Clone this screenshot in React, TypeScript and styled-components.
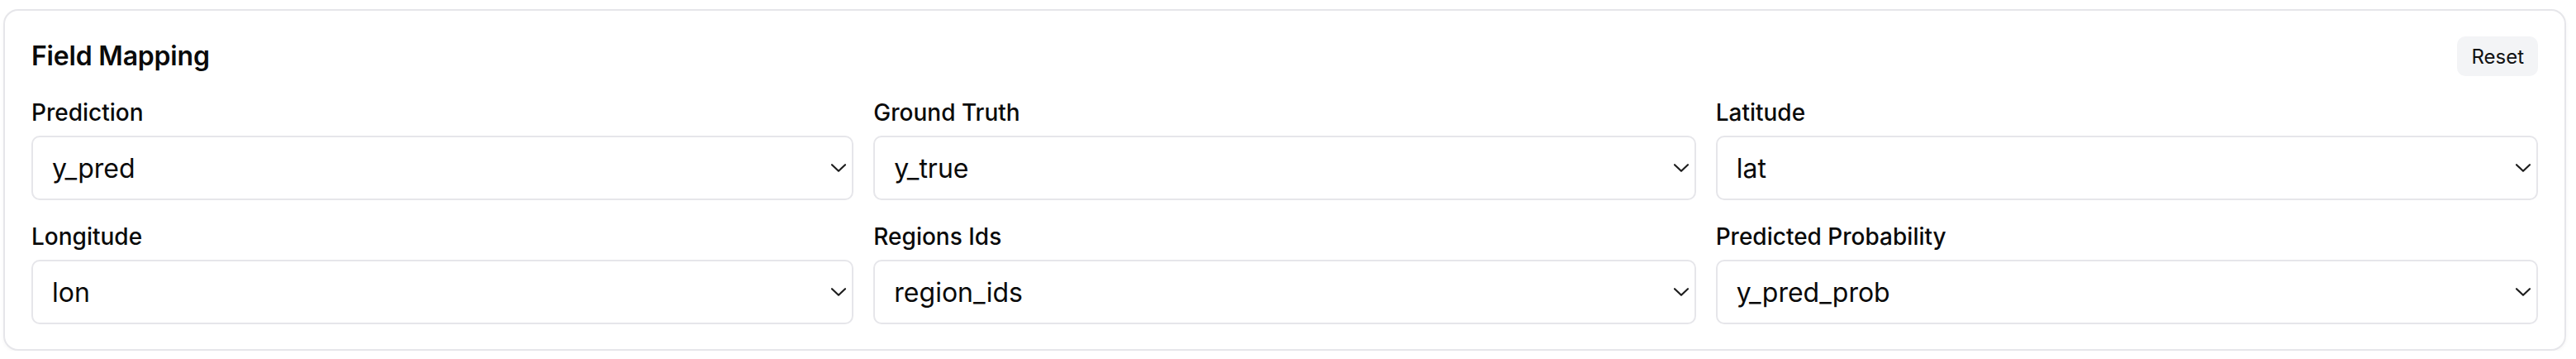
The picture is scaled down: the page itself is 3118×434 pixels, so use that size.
import styled, { createGlobalStyle } from 'styled-components';

const GlobalStyle = createGlobalStyle`
  html, body {
    margin: 0;
    padding: 0;
    background: #ffffff;
  }
  body {
    font-family: Inter, "Noto Sans", "Liberation Sans", sans-serif;
    color: #0a0a0a;
  }
`;

const fields = [
  { label: 'Prediction', value: 'y_pred' },
  { label: 'Ground Truth', value: 'y_true' },
  { label: 'Latitude', value: 'lat' },
  { label: 'Longitude', value: 'lon' },
  { label: 'Regions Ids', value: 'region_ids' },
  { label: 'Predicted Probability', value: 'y_pred_prob' },
];

function Chevron() {
  return (
    <ChevronIcon width="18" height="10" viewBox="0 0 18 10" fill="none">
      <path
        d="M1 1.2 L9 8.8 L17 1.2"
        stroke="#1f1f1f"
        strokeWidth="2.2"
        strokeLinecap="round"
        strokeLinejoin="round"
      />
    </ChevronIcon>
  );
}

export default function App() {
  return (
    <>
      <GlobalStyle />
      <Card>
        <Header>
          <Title>Field Mapping</Title>
          <ResetButton type="button">Reset</ResetButton>
        </Header>
        <FieldGrid>
          {fields.map((field) => (
            <Field key={field.label}>
              <Label>{field.label}</Label>
              <SelectWrap>
                <Select defaultValue={field.value}>
                  <option value={field.value}>{field.value}</option>
                </Select>
                <Chevron />
              </SelectWrap>
            </Field>
          ))}
        </FieldGrid>
      </Card>
    </>
  );
}

const Card = styled.section`
  box-sizing: border-box;
  width: 3102px;
  margin: 11px 0 0 4px;
  padding: 31px 32px 30px;
  border: 2px solid #e6e6ea;
  border-radius: 18px;
  background: #ffffff;
  box-shadow: 0 2px 4px rgba(0, 0, 0, 0.04);
  display: flex;
  flex-direction: column;
  gap: 24px;
`;

const Header = styled.div`
  display: flex;
  align-items: center;
  justify-content: space-between;
  height: 48px;
`;

const Title = styled.h2`
  margin: 0;
  font-size: 32px;
  font-weight: 600;
  line-height: 48px;
  letter-spacing: -0.2px;
`;

const ResetButton = styled.button`
  height: 48px;
  padding: 0 17px;
  border: none;
  border-radius: 10px;
  background: #f3f4f6;
  font-family: inherit;
  font-size: 24px;
  font-weight: 400;
  color: #111111;
  cursor: pointer;
`;

const FieldGrid = styled.div`
  display: grid;
  grid-template-columns: repeat(3, 1fr);
  column-gap: 24px;
  row-gap: 24px;
`;

const Field = styled.div`
  display: flex;
  flex-direction: column;
  gap: 8px;
`;

const Label = styled.label`
  font-size: 28px;
  font-weight: 500;
  line-height: 40px;
`;

const SelectWrap = styled.div`
  position: relative;
`;

const Select = styled.select`
  box-sizing: border-box;
  width: 100%;
  height: 78px;
  padding: 0 48px 0 23px;
  border: 2px solid #e6e6ea;
  border-radius: 10px;
  background: #ffffff;
  appearance: none;
  font-family: inherit;
  font-size: 32px;
  color: #0a0a0a;
  outline: none;
`;

const ChevronIcon = styled.svg`
  position: absolute;
  right: 9px;
  top: 50%;
  transform: translateY(-50%);
  pointer-events: none;
`;
